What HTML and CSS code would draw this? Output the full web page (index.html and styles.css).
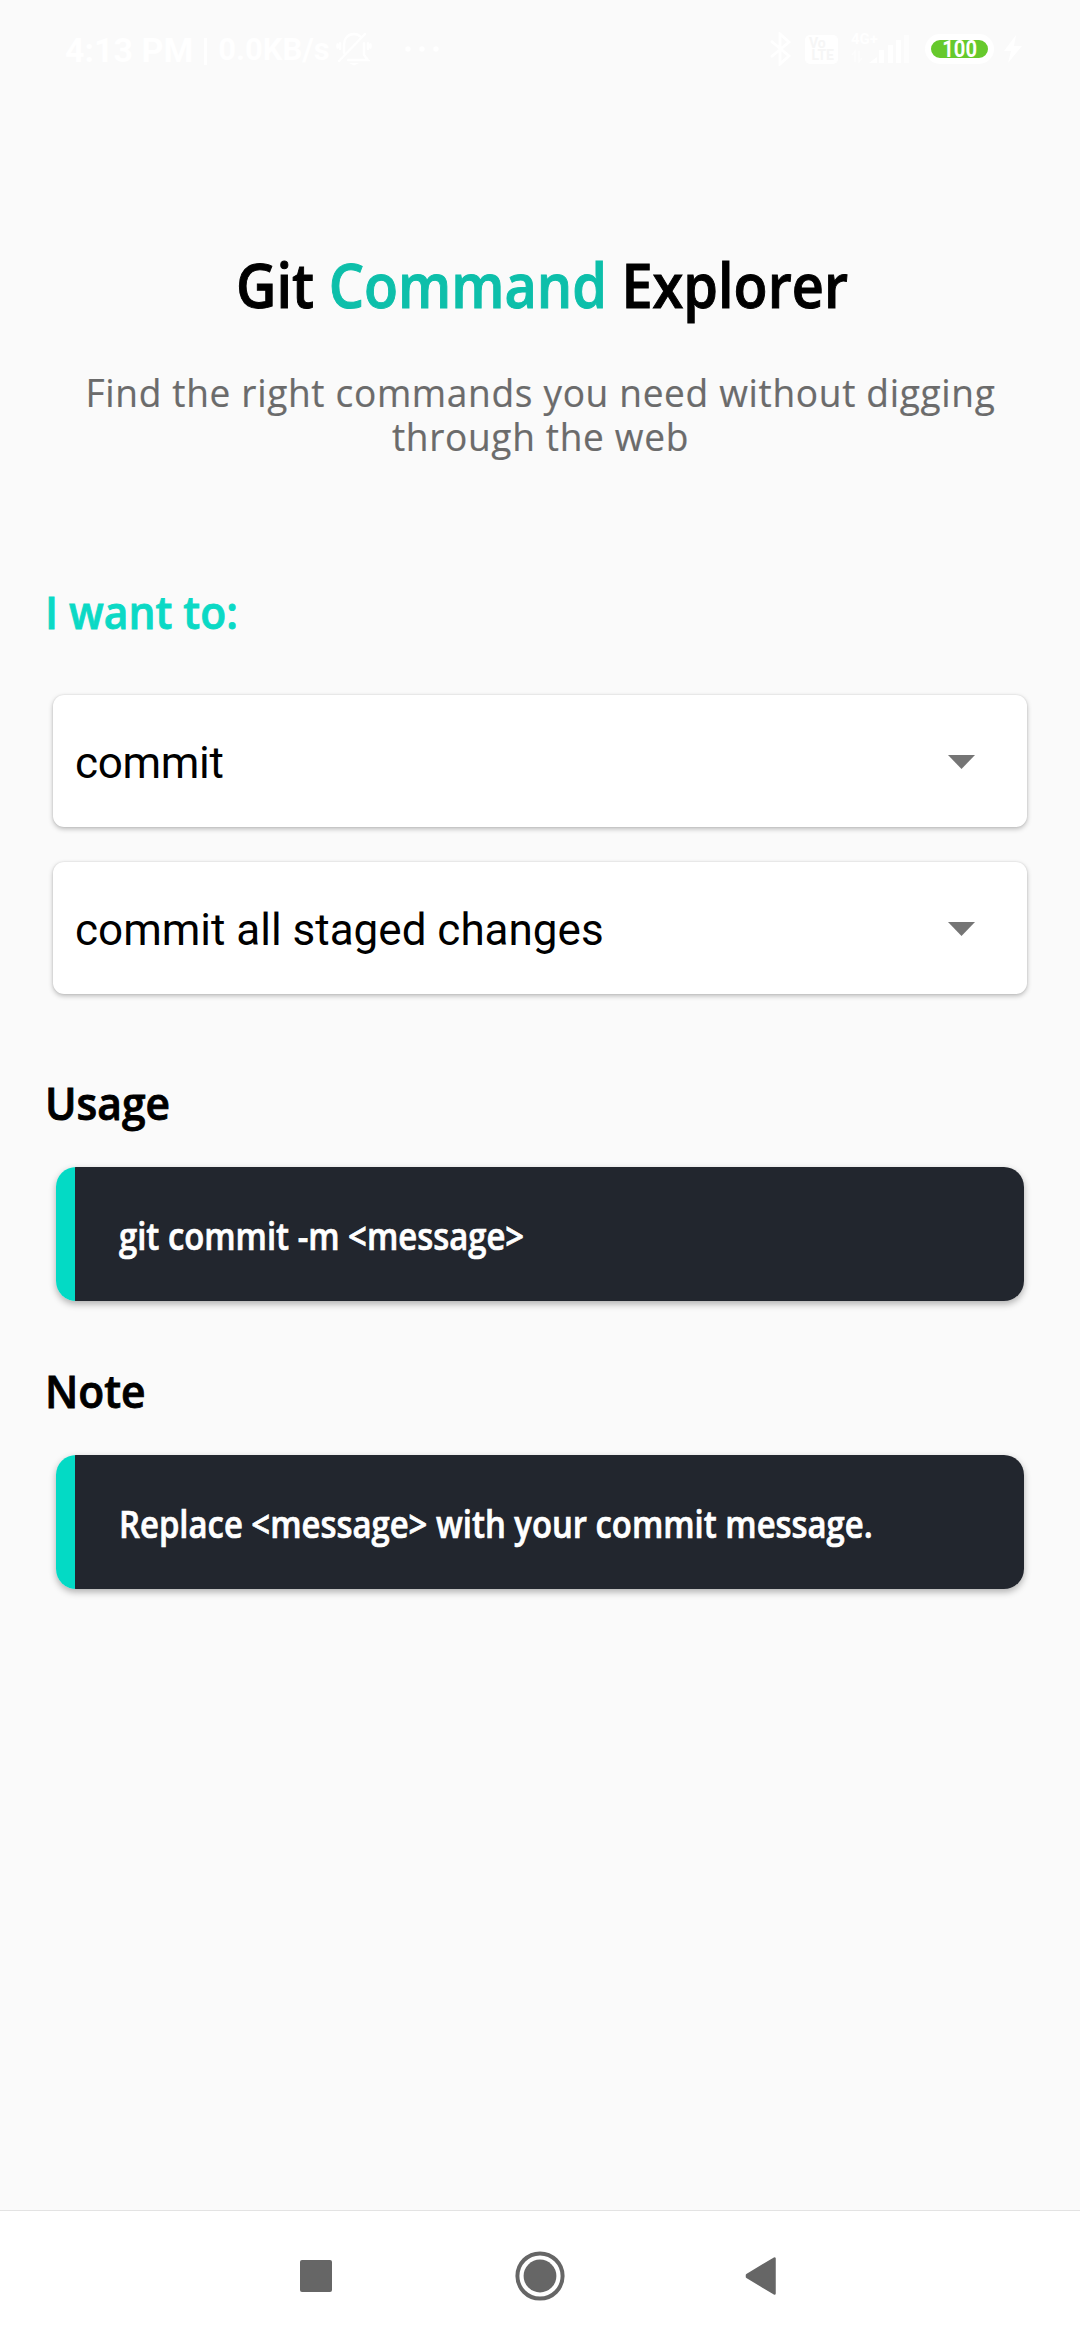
FILE: index.html
```
<!DOCTYPE html>
<html lang="en">
<head>
<meta charset="utf-8">
<title>Git Command Explorer</title>
<link rel="stylesheet" href="styles.css">
</head>
<body>
<header class="status">
  <span class="clock">4:13 PM</span>
  <span class="divider"></span>
  <span class="speed">0.0KB/s</span>
  <svg class="bell" width="36" height="34" viewBox="0 0 36 34" fill="none" stroke="#fff" stroke-width="2.4" stroke-linecap="round"><path d="M8 21V14C8 6 12 2 18 2c3 0 5 1 7 3M28 11v12l4 5H12M3 29 29 2M4 11v6M1.500 12.500v3M32 11v6M34.500 12.500v3"/><path d="M13 31h10l-5 2.500z" fill="#fff" stroke="none"/></svg>
  <svg class="dots" width="34" height="8" viewBox="0 0 34 8" fill="#fff"><circle cx="3" cy="4" r="2.700"/><circle cx="17" cy="4" r="2.700"/><circle cx="31" cy="4" r="2.700"/></svg>
  <span class="spacer"></span>
  <svg class="bluetooth" width="22" height="34" viewBox="0 0 22 34" fill="none" stroke="#fff" stroke-width="2.800"><path d="M2 9l18 15-9 8V2l9 8L2 25"/></svg>
  <span class="volte"><span>Vo</span><span class="lte">LTE</span></span>
  <span class="signal">
    <span class="network">4G+</span>
    <svg class="bars" width="60" height="28" viewBox="0 0 60 28" fill="#fff"><path d="M4 27V16l-3 4M8 16v11l3-4" fill="none" stroke="#fff" stroke-opacity=".5" stroke-width="1.500"/><path d="M18 28l8-6v6zM28 15h5v13h-5zM37 10h5v18h-5zM45 5h5v23h-5z"/><path opacity=".5" d="M53 0h5v28h-5z"/></svg>
  </span>
  <span class="battery"><span class="level">100</span></span>
  <svg class="bolt" width="18" height="28" viewBox="0 0 18 28"><path d="M12 0 0 16h7L4 28 18 11H10z" fill="#fff"/></svg>
</header>
<main class="content">
  <h1 class="title">Git <span class="accent">Command</span> Explorer</h1>
  <p class="subtitle">Find the right commands you need without digging<br>through the web</p>
  <h2 class="heading prompt">I want to:</h2>
  <div class="selects">
    <div class="select"><span class="short">commit</span><svg width="27" height="14" viewBox="0 0 27 14"><path d="M0 0h27L13.500 14z" fill="#757575"/></svg></div>
    <div class="select"><span>commit all staged changes</span><svg width="27" height="14" viewBox="0 0 27 14"><path d="M0 0h27L13.500 14z" fill="#757575"/></svg></div>
  </div>
  <h2 class="heading usage">Usage</h2>
  <div class="code"><span>git commit -m &lt;message&gt;</span></div>
  <h2 class="heading note">Note</h2>
  <div class="code"><span>Replace &lt;message&gt; with your commit message.</span></div>
</main>
<nav class="nav">
  <svg width="32" height="32" viewBox="0 0 32 32"><rect width="32" height="32" rx="2" fill="#666"/></svg>
  <svg class="home" width="50" height="50" viewBox="0 0 50 50"><circle cx="25" cy="25" r="22.600" fill="none" stroke="#666" stroke-width="4"/><circle cx="25" cy="25" r="16.400" fill="#666"/></svg>
  <svg width="32" height="38" viewBox="0 0 32 38"><path d="M2 18 29.500 1.500v35L2 20z" fill="#666" stroke="#666" stroke-width="2.500" stroke-linejoin="round"/></svg>
</nav>
</body>
</html>
```
FILE: styles.css
```
* { box-sizing: border-box; margin: 0; padding: 0; }
body {
  width: 1080px;
  height: 2340px;
  display: flex;
  flex-direction: column;
  background: #fafafa;
  color: #000;
  font-family: "Open Sans", sans-serif;
  overflow: hidden;
}
svg { display: block; flex: none; }

.status {
  display: flex;
  align-items: center;
  height: 98px;
  padding: 0 58px 0 65px;
  color: #fff;
  font-family: Roboto, sans-serif;
  white-space: nowrap;
}
.clock { padding-top: 2px; font-size: 34px; font-weight: 700; line-height: 40px; }
.divider { width: 3px; height: 27px; margin: 4px 11px 0; background: #fff; }
.speed { padding-top: 2px; font-size: 31px; font-weight: 700; line-height: 40px; }
.bell { margin-left: 6px; }
.dots { margin-left: 33px; }
.spacer { flex: 1; }
.volte {
  display: flex;
  flex-direction: column;
  width: 33px;
  height: 29px;
  margin: 0 13px 0 14px;
  padding: 2px 4px;
  border-radius: 5px;
  background: #fff;
  color: #f6f6f6;
  font-size: 14px;
  font-weight: 700;
  line-height: 12px;
}
.lte { align-self: flex-end; }
.signal { display: flex; flex-direction: column; width: 60px; height: 32px; }
.network { height: 11px; font-size: 15px; font-weight: 700; line-height: 13px; }
.bars { margin-top: -9px; }
.battery {
  display: flex;
  justify-content: center;
  width: 69px;
  height: 30px;
  margin: 0 10px 0 14px;
  border: 6px solid #fff;
  border-radius: 15px;
  background: #66c92c;
  font-size: 24px;
  font-weight: 700;
  line-height: 19px;
}
.level { transform: scaleX(.84); }

.content { flex: 1; padding: 144px 45px 0; }
.title {
  font-size: 61.5px;
  font-weight: 600;
  line-height: 84px;
  text-align: center;
  white-space: nowrap;
  transform: translateX(2px) scaleX(.907);
  -webkit-text-stroke: 1px;
}
.accent { color: #0dbfaa; }
.subtitle {
  margin-top: 44px;
  color: #6b6b6b;
  font-size: 39px;
  letter-spacing: .7px;
  line-height: 44px;
  text-align: center;
  white-space: nowrap;
  transform: translateX(.5px) scaleX(.95);
  -webkit-text-stroke: .2px;
}
.heading {
  font-size: 46px;
  font-weight: 600;
  line-height: 62px;
  transform: scaleX(.925);
  transform-origin: left;
  -webkit-text-stroke: .9px;
}
.prompt { margin-top: 122px; color: #0bd9c5; }
.selects {
  display: flex;
  flex-direction: column;
  gap: 35px;
  margin: 53px 8px 0;
}
.select {
  display: flex;
  align-items: center;
  justify-content: space-between;
  height: 132px;
  padding: 2px 52px 0 22px;
  border-radius: 11px;
  background: #fff;
  box-shadow: 0 2px 5px rgba(0, 0, 0, .25), 0 0 2px rgba(0, 0, 0, .12);
  font: 400 44px/52px Roboto, sans-serif;
}
.select span { padding-top: 2px; }
.short { letter-spacing: -.3px; }
.usage { margin-top: 77px; }
.note { margin-top: 58px; }
.code {
  display: flex;
  align-items: center;
  height: 134px;
  margin: 34px 11px 0;
  padding: 2px 0 0 63px;
  border-radius: 20px;
  background: linear-gradient(90deg, #03dac5 19px, #22262e 19px);
  box-shadow: 0 3px 7px rgba(0, 0, 0, .3);
  color: #fff;
  font-size: 37px;
  font-weight: 600;
  white-space: nowrap;
}
.code span {
  transform: scaleX(.888);
  transform-origin: left;
  -webkit-text-stroke: .7px;
}

.nav {
  display: flex;
  align-items: center;
  justify-content: space-between;
  height: 130px;
  padding: 0 303px 0 300px;
  border-top: 1px solid #e3e3e3;
  background: #fff;
}
.home { margin-left: 3px; }
```
